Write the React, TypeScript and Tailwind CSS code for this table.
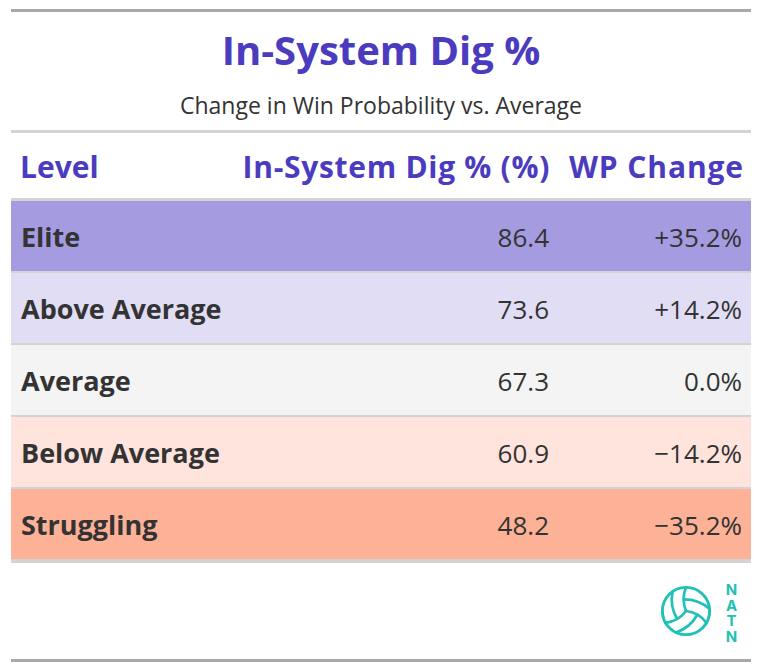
const rows = [
  { level: "Elite", dig: "86.4", wp: "+35.2%", bg: "bg-[#a59be0]" },
  { level: "Above Average", dig: "73.6", wp: "+14.2%", bg: "bg-[#e1ddf5]" },
  { level: "Average", dig: "67.3", wp: "0.0%", bg: "bg-[#f4f4f4]" },
  { level: "Below Average", dig: "60.9", wp: "\u221214.2%", bg: "bg-[#fee4dc]" },
  { level: "Struggling", dig: "48.2", wp: "\u221235.2%", bg: "bg-[#fdb196]" },
];

const Volleyball = () => (
  <svg
    viewBox="1 1 22 22"
    className="size-[52px] text-[#22c0b6]"
    fill="none"
    stroke="currentColor"
    strokeWidth={1.15}
    strokeLinecap="round"
    strokeLinejoin="round"
  >
    <circle cx="12" cy="12" r="10" strokeWidth={1.25} />
    <path d="M11.1 7.1a16.55 16.55 0 0 1 10.9 4" />
    <path d="M12 12a12.6 12.6 0 0 1-8.7 5" />
    <path d="M16.8 13.6a16.55 16.55 0 0 1-9 7.5" />
    <path d="M20.7 17a12.8 12.8 0 0 0-8.7-5 13.3 13.3 0 0 1 0-10" />
    <path d="M6.3 3.8a16.55 16.55 0 0 0 1.9 11.5" />
  </svg>
);

export default function App() {
  return (
    <div className="w-[760px] h-[672px] bg-white pl-[11px] pr-[9px] pt-[9px] font-['Open_Sans',sans-serif] text-[#333333]">
      <div className="h-[3px] bg-[#a8a8a8]" />

      <div className="h-[118px] flex flex-col items-center">
        <h1 className="mt-[14px] text-[40px] leading-[48px] font-bold text-[#4b3cbf]">In-System Dig %</h1>
        <p className="mt-[16px] text-[23px] leading-[30px]">Change in Win Probability vs. Average</p>
      </div>

      <div className="h-[3px] bg-[#d3d3d3]" />

      <div className="grid grid-cols-[1fr_320px_202px] h-[65px] pt-[16px] text-[30px] leading-[36px] font-bold text-[#4b3cbf]">
        <div className="pl-[9px]">Level</div>
        <div className="text-right tracking-[0.7px] mr-[-1px]">In-System Dig % (%)</div>
        <div className="text-right pr-[8px] tracking-[0.9px] mr-[-1px]">WP Change</div>
      </div>

      <div className="h-[3px] bg-[#d3d3d3]" />

      {rows.map((r, i) => (
        <div
          key={r.level}
          className={`grid grid-cols-[1fr_320px_202px] items-center h-[72px] border-b-[#d3d3d3] ${
            i === rows.length - 1 ? "border-b-4 h-[74px]" : "border-b-2"
          } ${r.bg}`}
        >
          <div className="pl-[10px] pt-[2px] text-[27px] font-bold">{r.level}</div>
          <div className="text-right pt-[2px] text-[26px]">{r.dig}</div>
          <div className="text-right pt-[2px] pr-[9px] text-[26px]">{r.wp}</div>
        </div>
      ))}

      <div className="h-[96px] flex justify-end items-center gap-[12px] pr-[12px]">
        <Volleyball />
        <div className="[writing-mode:vertical-rl] [text-orientation:upright] tracking-[-3.5px] text-[15px] leading-[15px] font-bold text-[#22c0b6] font-['Inter',sans-serif]">
          NATN
        </div>
      </div>

      <div className="h-[3px] bg-[#a8a8a8]" />
    </div>
  );
}
